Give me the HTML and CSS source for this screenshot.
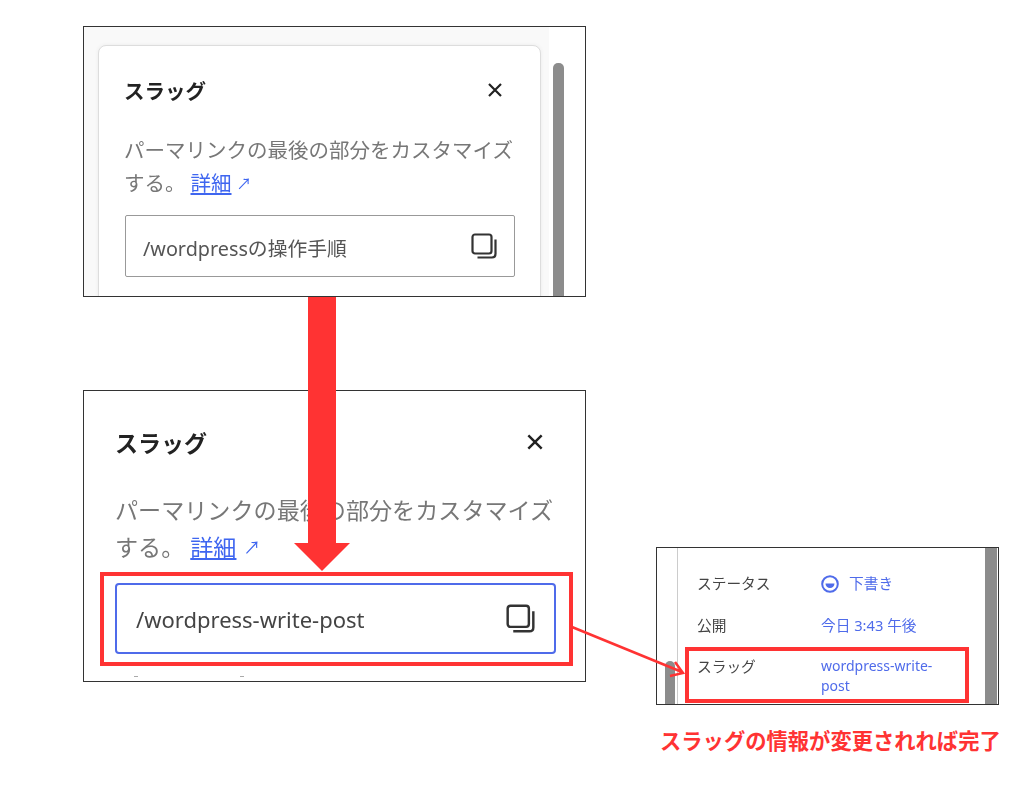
FILE: index.html
```html
<!DOCTYPE html>
<html lang="ja">
<head>
    <meta charset="UTF-8">
    <meta name="viewport" content="width=device-width, initial-scale=1.0">
    <title>スラッグの変更</title>
    <link rel="stylesheet" href="styles.css">
</head>
<body>
    <div class="canvas">
        <!-- 変更前 -->
        <div class="shot shot-before">
            <div class="panel-back">
                <div class="slug-card">
                    <div class="slug-head">
                        <h2 class="slug-title">スラッグ</h2>
                        <svg class="close-icon" viewBox="0 0 18 18"><path d="M3 3 15 15M15 3 3 15"/></svg>
                    </div>
                    <div class="slug-desc">
                        <div>パーマリンクの最後の部分をカスタマイズ</div>
                        <div class="desc-line">
                            <span>する。</span>
                            <a class="more-link">詳細</a>
                            <span class="ext-mark">↗</span>
                        </div>
                    </div>
                    <div class="slug-input">
                        <span class="slug-value">/wordpressの操作手順</span>
                        <svg class="copy-icon" viewBox="0 0 26 26"><rect x="1.5" y="1.5" width="19" height="19" rx="2.500"/><path d="M24.5 6.500V21q0 3.500-3.500 3.500H6.500"/></svg>
                    </div>
                </div>
            </div>
            <div class="scrollbar"></div>
        </div>

        <!-- 変更後 -->
        <div class="shot shot-after">
            <div class="slug-head">
                <h2 class="slug-title">スラッグ</h2>
                <svg class="close-icon" viewBox="0 0 18 18"><path d="M3 3 15 15M15 3 3 15"/></svg>
            </div>
            <div class="slug-desc">
                <div>パーマリンクの最後の部分をカスタマイズ</div>
                <div class="desc-line">
                    <span>する。</span>
                    <a class="more-link">詳細</a>
                    <span class="ext-mark">↗</span>
                </div>
            </div>
            <div class="slug-input">
                <span class="slug-value">/wordpress-write-post</span>
                <svg class="copy-icon" viewBox="0 0 26 26"><rect x="1.5" y="1.5" width="19" height="19" rx="2.500"/><path d="M24.5 6.500V21q0 3.500-3.500 3.500H6.500"/></svg>
            </div>
            <!-- 切り抜きの端に残った次の行 -->
            <div class="cut-mark cut-a"></div>
            <div class="cut-mark cut-b"></div>
        </div>

        <!-- サイドバーの表示 -->
        <div class="shot shot-sidebar">
            <div class="left-rule"></div>
            <div class="left-thumb"></div>
            <div class="right-bar"></div>
            <dl class="meta-list">
                <div class="meta-row">
                    <dt>ステータス</dt>
                    <dd class="meta-status">
                        <svg class="status-icon" viewBox="0 0 18 18"><circle cx="9" cy="9" r="7.800"/><path class="fill" d="M4.500 8.500h9a4.500 4.500 0 0 1-9 0z"/></svg>
                        <span>下書き</span>
                    </dd>
                </div>
                <div class="meta-row">
                    <dt>公開</dt>
                    <dd>今日 3:43 午後</dd>
                </div>
                <div class="meta-row">
                    <dt>スラッグ</dt>
                    <dd class="meta-slug">wordpress-write-<br>post</dd>
                </div>
            </dl>
        </div>

        <!-- 注釈 -->
        <div class="red-box box-input"></div>
        <div class="red-box box-slug"></div>
        <svg class="arrows" viewBox="0 0 1024 800">
            <path class="big-arrow" d="M308 297H336V543H350L322 571 294 543H308Z"/>
            <path class="thin-arrow" d="M572 627 682 672M675 662 683 673 670 676"/>
        </svg>
        <p class="caption">スラッグの情報が変更されれば完了</p>
    </div>
</body>
</html>
```

FILE: styles.css
```css
body {
    margin: 0;
    background: #fff;
    font-family: "Noto Sans", "Noto Sans CJK JP", sans-serif;
    color: #1e1e1e;
    overflow: hidden;
}

.canvas {
    position: relative;
    width: 1024px;
    height: 800px;
}

/* スクリーンショット枠 */
.shot {
    position: absolute;
    box-sizing: border-box;
    border: 1px solid #333;
    background: #fff;
    overflow: hidden;
}

.shot-before {
    left: 83px;
    top: 26px;
    width: 503px;
    height: 271px;
}

.shot-after {
    left: 83px;
    top: 390px;
    width: 503px;
    height: 292px;
    padding: 33px 29px 0 32px;
}

.shot-sidebar {
    left: 656px;
    top: 547px;
    width: 343px;
    height: 158px;
}

/* 画像の粗さに合わせる */
.slug-head,
.slug-desc,
.slug-input > *,
.meta-list {
    filter: blur(0.35px);
}

/* 変更前 */
.panel-back {
    width: 465px;
    height: 100%;
    box-sizing: border-box;
    padding: 18px 8px 0 14px;
    background: #f9f9f9;
}

.slug-card {
    box-sizing: border-box;
    height: 300px;
    padding: 26px 26px 0 26px;
    background: #fff;
    border: 1px solid #ddd;
    border-radius: 8px;
    box-shadow: 0 0 4px rgba(0, 0, 0, 0.06);
}

.scrollbar {
    position: absolute;
    left: 469px;
    top: 36px;
    width: 11px;
    height: 240px;
    background: #8c8c8c;
    border-radius: 5px 5px 0 0;
}

/* スラッグパネル */
.slug-head {
    display: flex;
    justify-content: space-between;
    align-items: center;
    height: 36px;
}

.slug-title {
    margin: 0 0 0 -1px;
    font-size: 20.500px;
    font-weight: 700;
    color: #222;
}

.close-icon {
    width: 18px;
    height: 18px;
    margin-right: 10px;
    fill: none;
    stroke: #222;
    stroke-width: 2.200;
}

.slug-desc {
    margin: 26px 0 15px -1px;
    font-size: 20.500px;
    line-height: 33px;
    color: #777;
    white-space: nowrap;
}

.desc-line {
    display: flex;
}

.more-link {
    margin-left: 5px;
    color: #3f66f0;
    text-decoration: underline;
}

.ext-mark {
    margin-left: 5px;
    color: #3f66f0;
    font-size: 15px;
}

.slug-input {
    box-sizing: border-box;
    display: flex;
    justify-content: space-between;
    align-items: center;
    width: 390px;
    height: 62px;
    padding: 0 17px;
    border: 1px solid #999;
    border-radius: 2px;
    font-size: 19.800px;
    color: #555;
}

.slug-value {
    margin-top: 3px;
}

.copy-icon {
    width: 26px;
    height: 26px;
    fill: none;
    stroke: #333;
    stroke-width: 2.200;
}

/* 変更後の拡大表示 */
.shot-after .slug-title {
    font-size: 23px;
}

.shot-after .close-icon {
    width: 20px;
    height: 20px;
    margin-right: 11px;
}

.shot-after .slug-desc {
    margin: 32px 0 17px -1px;
    font-size: 23.100px;
    line-height: 37px;
}

.shot-after .more-link {
    margin-left: 6px;
}

.shot-after .ext-mark {
    margin-left: 7px;
    font-size: 17px;
}

.shot-after .slug-input {
    width: 441px;
    height: 71px;
    margin-left: -1px;
    padding: 0 19px;
    border: 2px solid #4f6bea;
    border-radius: 4px;
    font-size: 22px;
    color: #444;
}

.shot-after .slug-value {
    margin-top: 1px;
}

.shot-after .copy-icon {
    width: 29px;
    height: 29px;
}

.cut-mark {
    position: absolute;
    top: 285px;
    width: 4px;
    height: 1px;
    background: #aaa;
}

.cut-a {
    left: 50px;
}

.cut-b {
    left: 156px;
}

/* サイドバー */
.left-rule {
    position: absolute;
    left: 20px;
    top: 0;
    bottom: 0;
    width: 1px;
    background: #ccc;
}

.left-thumb {
    position: absolute;
    left: 8px;
    top: 113px;
    bottom: 0;
    width: 10px;
    background: #8c8c8c;
    border-radius: 5px 5px 0 0;
}

.right-bar {
    position: absolute;
    right: 1px;
    top: 0;
    bottom: 0;
    width: 12px;
    background: #8c8c8c;
}

.meta-list {
    margin: 0;
    padding: 25px 0 0 40px;
}

.meta-row {
    display: flex;
    margin-bottom: 21px;
    font-size: 14.700px;
    line-height: 21px;
}

.meta-row:last-child {
    margin-top: -1px;
}

.meta-row dt {
    width: 124px;
    color: #444;
}

.meta-row dd {
    margin: 0;
    color: #4f6bea;
}

.meta-status {
    display: flex;
    align-items: center;
}

.meta-slug {
    font-size: 14px;
    line-height: 20px;
}

.status-icon {
    width: 18px;
    height: 18px;
    margin-right: 10px;
    fill: none;
    stroke: #4f6bea;
    stroke-width: 2;
}

.status-icon .fill {
    fill: #4f6bea;
    stroke: none;
}

/* 赤い注釈 */
.red-box {
    position: absolute;
    box-sizing: border-box;
    border: 4px solid #ff3333;
}

.box-input {
    left: 100px;
    top: 572px;
    width: 473px;
    height: 94px;
}

.box-slug {
    left: 685px;
    top: 647px;
    width: 284px;
    height: 56px;
}

.arrows {
    position: absolute;
    left: 0;
    top: 0;
    width: 1024px;
    height: 800px;
    pointer-events: none;
}

.big-arrow {
    fill: #ff3333;
}

.thin-arrow {
    fill: none;
    stroke: #ff3333;
    stroke-width: 2.500;
}

.caption {
    position: absolute;
    left: 660px;
    top: 726px;
    margin: 0;
    font-size: 21.300px;
    line-height: 30px;
    font-weight: 700;
    color: #ff3333;
    white-space: nowrap;
}
```
